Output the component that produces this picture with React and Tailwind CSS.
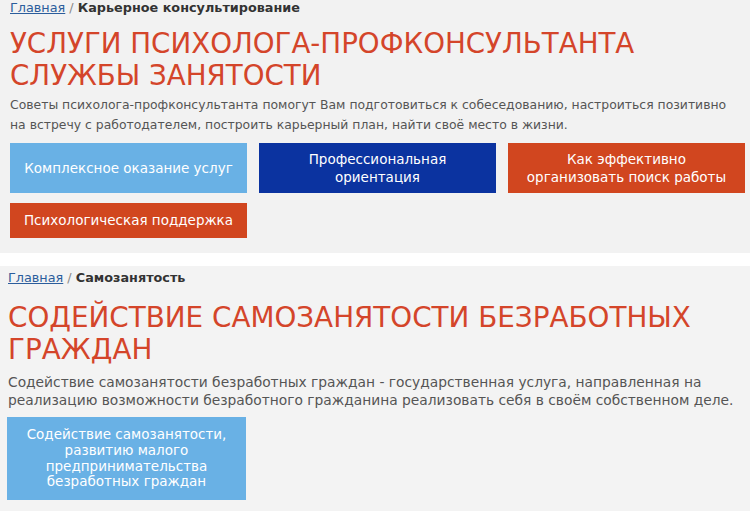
import React from 'react';

const Crumb = ({ current, className = '' }) => (
    <div className={`text-[12.8px] leading-[16px] text-[#888] ${className}`}>
        <a href="#" className="text-[#2b5d9c] underline">Главная</a>
        <span> / </span>
        <span className="font-bold text-[#333]">{current}</span>
    </div>
);

const Tile = ({ color, className = '', children }) => (
    <a href="#" className={`flex items-center justify-center text-center text-white text-[13.5px] ${color} ${className}`}>
        <span>{children}</span>
    </a>
);

export default function App() {
    return (
        <div className="w-[750px] h-[511px] overflow-hidden bg-white font-['DejaVu_Sans','Liberation_Sans',sans-serif]">
            {/* Карьерное консультирование */}
            <section className="h-[253px] bg-[#f2f2f2] pl-[10px]">
                <Crumb current="Карьерное консультирование" />
                <h1 className="mt-[12px] text-[27.7px] leading-[32px] font-normal text-[#d4452a]">
                    <span className="block whitespace-nowrap">УСЛУГИ ПСИХОЛОГА-ПРОФКОНСУЛЬТАНТА</span>
                    <span className="block whitespace-nowrap">СЛУЖБЫ ЗАНЯТОСТИ</span>
                </h1>
                <p className="mt-[3px] text-[12.4px] leading-[20px] text-[#555]">
                    <span className="block whitespace-nowrap">Советы психолога-профконсультанта помогут Вам подготовиться к собеседованию, настроиться позитивно</span>
                    <span className="block whitespace-nowrap">на встречу с работодателем, построить карьерный план, найти своё место в жизни.</span>
                </p>
                <div className="mt-[8px] grid grid-cols-[237px_237px_237px] gap-x-[12px] gap-y-[10px]">
                    <Tile color="bg-[#69b1e5]" className="h-[50px]">Комплексное оказание услуг</Tile>
                    <Tile color="bg-[#0b33a0]" className="h-[50px] leading-[18px]">Профессиональная<br />ориентация</Tile>
                    <Tile color="bg-[#d1461f]" className="h-[50px] leading-[18px]">Как эффективно<br />организовать поиск работы</Tile>
                    <Tile color="bg-[#d1461f]" className="h-[35px]">Психологическая поддержка</Tile>
                </div>
            </section>

            <div className="h-[13px] bg-white" />

            {/* Самозанятость */}
            <section className="h-[245px] bg-[#f3f3f3] pl-[8px] pt-[4px]">
                <Crumb current="Самозанятость" />
                <h1 className="mt-[16px] text-[27.8px] leading-[32px] font-normal text-[#d4452a]">
                    <span className="block whitespace-nowrap">СОДЕЙСТВИЕ САМОЗАНЯТОСТИ БЕЗРАБОТНЫХ</span>
                    <span className="block whitespace-nowrap">ГРАЖДАН</span>
                </h1>
                <p className="mt-[7px] text-[13.8px] leading-[18px] text-[#555]">
                    <span className="block whitespace-nowrap">Содействие самозанятости безработных граждан - государственная услуга, направленная на</span>
                    <span className="block whitespace-nowrap">реализацию возможности безработного гражданина реализовать себя в своём собственном деле.</span>
                </p>
                <Tile color="bg-[#69b1e5]" className="mt-[8px] -ml-[1px] w-[239px] h-[83px] leading-[15.6px]">
                    Содействие самозанятости,<br />развитию малого<br />предпринимательства<br />безработных граждан
                </Tile>
            </section>
        </div>
    );
}
